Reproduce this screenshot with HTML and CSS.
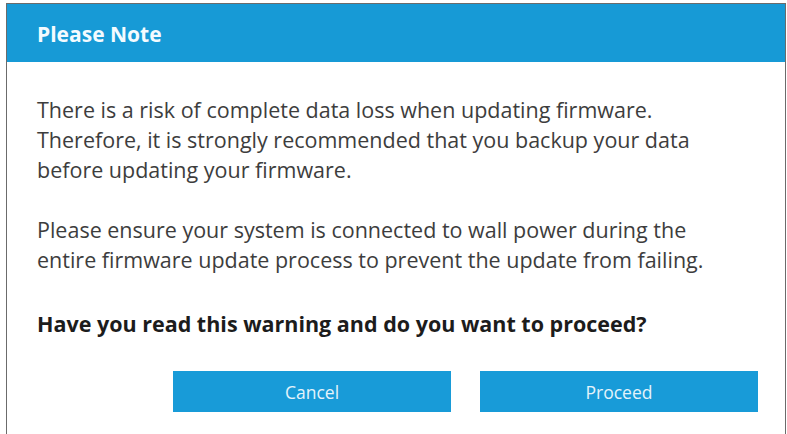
FILE: index.html
```html
<!DOCTYPE html>
<html lang="en">
<head>
  <meta charset="UTF-8" />
  <meta name="viewport" content="width=device-width, initial-scale=1.0"/>
  <title>Please Note</title>
  <link rel="stylesheet" href="styles.css">
</head>
<body>
  <div class="dialog">
    <div class="dialog-header">Please Note</div>
    <div class="dialog-body">
      <p>There is a risk of complete data loss when updating firmware.<br>
      Therefore, it is strongly recommended that you backup your data<br>
      before updating your firmware.</p>
      <p>Please ensure your system is connected to wall power during the<br>
      entire firmware update process to prevent the update from failing.</p>
      <p class="question">Have you read this warning and do you want to proceed?</p>
      <div class="actions">
        <button type="button" class="btn">Cancel</button>
        <button type="button" class="btn">Proceed</button>
      </div>
    </div>
  </div>
</body>
</html>
```

FILE: styles.css
```css
body {
  margin: 0;
  background: #fff;
  font-family: 'Open Sans', 'Noto Sans', sans-serif;
  overflow: hidden;
}
.dialog {
  margin: 3px 0 0 6px;
  width: 778px;
  height: 460px;
  border: 1px solid #6b6b6b;
  background: #fff;
}
.dialog-header {
  height: 58px;
  display: flex;
  align-items: center;
  padding: 2px 0 0 30px;
  box-sizing: border-box;
  background: #179ad6;
  color: #f4fbff;
  font-weight: bold;
  font-size: 21px;
}
.dialog-body {
  padding: 33px 27px 0 30px;
  color: #3d3d3d;
  font-size: 21.5px;
  line-height: 30px;
}
.dialog-body p {
  margin: 0 0 30px;
}
.question {
  font-weight: bold;
  color: #1c1c1c;
  margin-top: 34px !important;
}
.actions {
  display: flex;
  justify-content: flex-end;
  gap: 29px;
  margin-top: 32px;
}
.btn {
  width: 278px;
  height: 41px;
  border: none;
  background: #189bd8;
  color: #e4f3fb;
  font-family: inherit;
  font-size: 17.5px;
  cursor: pointer;
}
```
